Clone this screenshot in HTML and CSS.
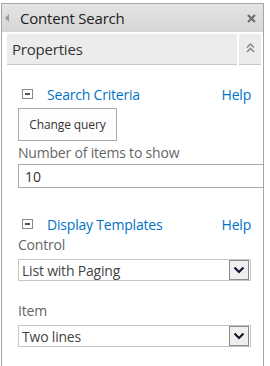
FILE: index.html
```html
<!DOCTYPE html>
<html lang="en">
<head>
    <meta charset="UTF-8">
    <title>Content Search</title>
    <link rel="stylesheet" href="styles.css">
</head>
<body>
    <div class="panel">
        <div class="panel-head">
            <span class="back-arrow"></span>
            <span class="panel-title">Content Search</span>
            <svg class="close" width="9" height="9" viewBox="0 0 9 9"><path d="M1 1 L8 8 M8 1 L1 8" stroke="#6e6e6e" stroke-width="2.2"/></svg>
        </div>
        <div class="props">
            <div class="props-title">Properties</div>
            <div class="props-toggle">
                <svg width="9" height="10" viewBox="0 0 9 10"><path d="M1 4.5 L4.5 1 L8 4.5 M1 9 L4.5 5.5 L8 9" fill="none" stroke="#8a8a8a" stroke-width="1.6"/></svg>
            </div>
        </div>
        <div class="content">
            <div class="section-head">
                <span class="minus"></span>
                <a class="section-title">Search Criteria</a>
                <a class="help">Help</a>
            </div>
            <button class="btn">Change query</button>
            <div class="label">Number of items to show</div>
            <input class="text-input" type="text" value="10">

            <div class="section-head second">
                <span class="minus"></span>
                <a class="section-title">Display Templates</a>
                <a class="help">Help</a>
            </div>
            <div class="label">Control</div>
            <div class="dropdown">
                <span>List with Paging</span>
                <span class="drop-btn"><svg width="12" height="8" viewBox="0 0 12 8"><path d="M1.5 1.5 L6 6 L10.5 1.5" fill="none" stroke="#101830" stroke-width="2.2"/></svg></span>
            </div>
            <div class="label item-label">Item</div>
            <div class="dropdown">
                <span>Two lines</span>
                <span class="drop-btn"><svg width="12" height="8" viewBox="0 0 12 8"><path d="M1.5 1.5 L6 6 L10.5 1.5" fill="none" stroke="#101830" stroke-width="2.2"/></svg></span>
            </div>
        </div>
    </div>
</body>
</html>
```

FILE: styles.css
```css
* { margin: 0; padding: 0; box-sizing: border-box; }
body { font-family: "Open Sans", Arial, sans-serif; font-size: 14px; letter-spacing: -0.2px; background: #fff; color: #444; }
.panel { margin: 3px 0 0 1px; width: 263px; height: 363px; border: 1px solid #a6a6a6; border-bottom: none; overflow: hidden; }
.panel-head { height: 28px; display: flex; align-items: center; background: linear-gradient(#e4e4e4, #d6d6d6); padding: 0 7px 0 3px; }
.back-arrow { width: 0; height: 0; border-top: 4px solid transparent; border-bottom: 4px solid transparent; border-right: 4px solid #9a9a9a; margin-right: 11px; }
.panel-title { flex: 1; color: #222; font-size: 15px; }
.props { display: flex; gap: 2px; margin: 2px 2px 0 5px; height: 31px; }
.props-title { flex: 1; background: #ececec; border-bottom: 1px solid #c8c8c8; padding: 5px 5px; font-size: 15px; color: #333; }
.props-toggle { width: 22px; background: #ececec; border-bottom: 1px solid #c8c8c8; display: flex; justify-content: center; padding-top: 9px; }
.content { padding: 20px 0 0 16px; }
.section-head { display: flex; align-items: center; height: 18px; padding: 0 12px 0 4px; }
.section-head.second { margin-top: 27px; }
.minus { width: 11px; height: 10px; border: 1px solid #8a8a8a; position: relative; margin-right: 14px; }
.minus::after { content: ""; position: absolute; left: 2px; right: 2px; top: 3px; height: 2px; background: #555; }
.section-title { flex: 1; color: #0072c6; font-size: 14px; }
.help { color: #0072c6; font-size: 14px; }
.btn { display: block; margin-top: 5px; width: 99px; height: 33px; border: 1px solid #ababab; background: #fdfdfd; font-family: inherit; font-size: 12px; letter-spacing: -0.1px; color: #333; }
.label { margin-top: 2px; line-height: 19px; color: #666; font-size: 14px; }
.text-input { display: block; margin-top: 2px; width: 260px; height: 24px; border: 1px solid #ababab; padding: 0 6px; font-family: inherit; font-size: 14px; color: #333; }
.dropdown { display: flex; align-items: center; justify-content: space-between; margin-top: 5px; width: 233px; height: 22px; border: 1px solid #c6c6c6; padding-left: 3px; color: #444; font-size: 14px; }
.drop-btn { width: 20px; height: 20px; border: 1px solid #8a8a8a; background: #efefef; display: flex; align-items: center; justify-content: center; margin-right: 1px; }
.item-label { margin-top: 20px; }
```
